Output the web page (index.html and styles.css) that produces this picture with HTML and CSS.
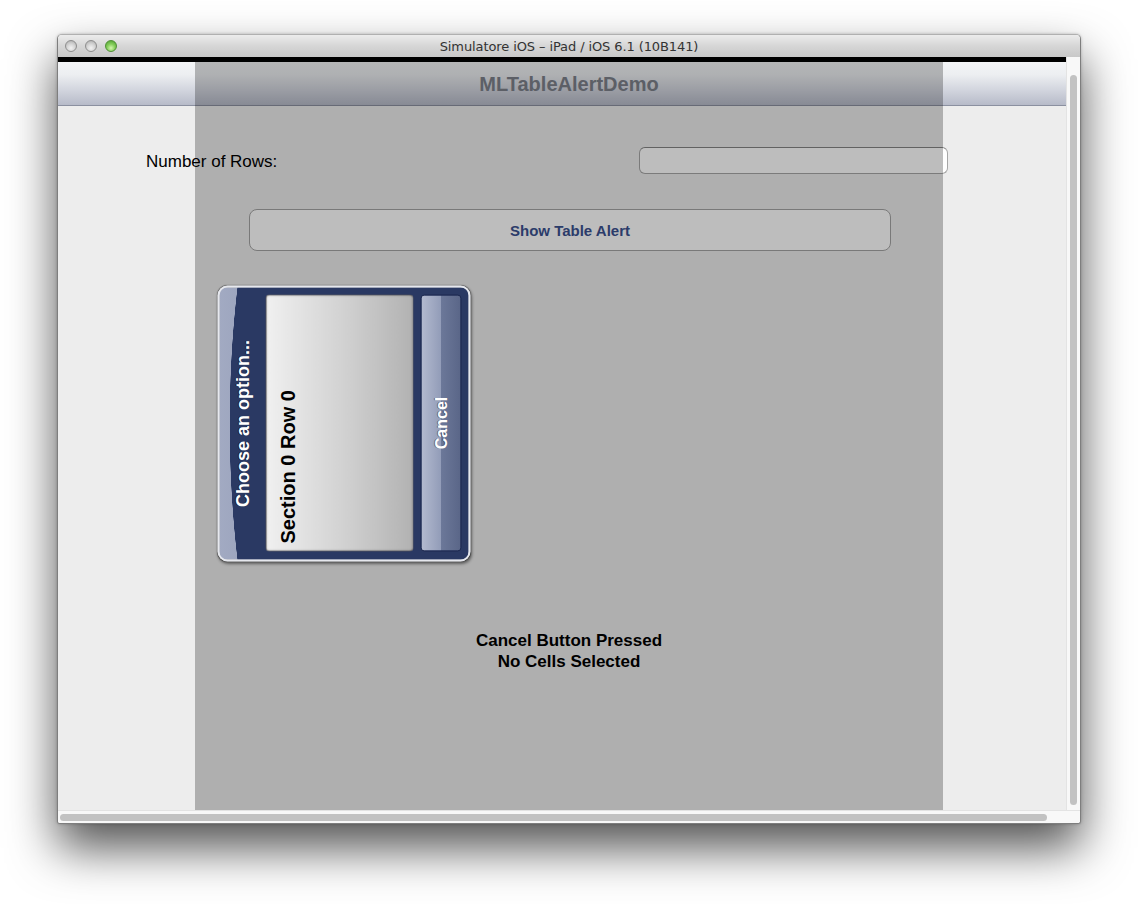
FILE: index.html
```html
<!DOCTYPE html>
<html>
<head>
<meta charset="utf-8">
<title>Simulatore iOS</title>
<link rel="stylesheet" href="styles.css">
</head>
<body>
<div class="window">
  <div class="titlebar">
    <div class="lights">
      <span class="light"></span>
      <span class="light"></span>
      <span class="light green"></span>
    </div>
    <div class="win-title">Simulatore iOS – iPad / iOS 6.1 (10B141)</div>
    <div></div>
  </div>
  <div class="body">
    <div class="screen">
      <div class="statusbar"></div>
      <div class="navbar"><div class="nav-title">MLTableAlertDemo</div></div>
      <div class="content">
        <div class="row">
          <span class="label">Number of Rows:</span>
          <div class="field"></div>
        </div>
        <div class="button">Show Table Alert</div>
        <div class="status">Cancel Button Pressed<br>No Cells Selected</div>
      </div>
      <div class="overlay"></div>
      <div class="alert">
        <div class="alert-title">Choose an option...</div>
        <div class="alert-table">
          <div class="cell">Section 0 Row 0</div>
        </div>
        <div class="alert-cancel">Cancel</div>
      </div>
    </div>
    <div class="vscroll"><div class="vthumb"></div></div>
  </div>
  <div class="hscroll"><div class="hthumb"></div></div>
</div>
</body>
</html>
```
FILE: styles.css
```css
html, body {
  margin: 0;
  background: #ffffff;
}
body {
  width: 1138px;
  height: 904px;
  overflow: hidden;
  font-family: "Liberation Sans", Arial, sans-serif;
}
.window {
  margin: 34px 0 0 57px;
  width: 1024px;
  height: 790px;
  box-sizing: border-box;
  border: 1px solid #7e7e7e;
  border-top-color: #b0b0b0;
  border-radius: 5px 5px 3px 3px;
  display: flex;
  flex-direction: column;
  background: #f7f7f7;
  box-shadow: 0 24px 48px rgba(0, 0, 0, 0.68), 0 0 3px rgba(0, 0, 0, 0.25);
  overflow: hidden;
}
.titlebar {
  height: 22px;
  flex: none;
  display: grid;
  grid-template-columns: 1fr auto 1fr;
  align-items: center;
  background: linear-gradient(#ececec, #d6d6d6 50%, #c8c8c8);
}
.lights {
  display: flex;
  gap: 8px;
  padding-left: 7px;
}
.light {
  width: 12px;
  height: 12px;
  box-sizing: border-box;
  border-radius: 50%;
  border: 1px solid #8e8e8e;
  background: radial-gradient(circle at 50% 70%, #f2f2f2 0, #d6d6d6 45%, #a9a9a9 100%);
}
.light.green {
  border-color: #4f8f35;
  background: radial-gradient(circle at 50% 70%, #d4f5b0 0, #86cf5c 45%, #4a9a2e 100%);
}
.win-title {
  font-family: "DejaVu Sans", sans-serif;
  font-size: 13px;
  color: #333;
  letter-spacing: -0.1px;
  padding-top: 1px;
}
.body {
  flex: 1;
  display: flex;
  min-height: 0;
}
.screen {
  width: 1008px;
  position: relative;
  display: flex;
  flex-direction: column;
}
.statusbar {
  height: 5px;
  background: #000;
  flex: none;
}
.navbar {
  height: 44px;
  flex: none;
  box-sizing: border-box;
  border-bottom: 1px solid #8b90a0;
  background: linear-gradient(#f4f5f7, #eceef1 30%, #d2d5de 65%, #b7bbc9);
  display: flex;
}
.nav-title {
  margin-left: 137px;
  width: 748px;
  text-align: center;
  line-height: 45px;
  font-size: 20px;
  font-weight: bold;
  color: #7c818a;
}
.content {
  flex: 1;
  background: #ededed;
}
.row {
  display: flex;
  justify-content: space-between;
  align-items: center;
  padding: 41px 118px 0 88px;
}
.label {
  font-size: 17px;
  color: #000;
  padding-top: 2px;
}
.field {
  width: 309px;
  height: 27px;
  box-sizing: border-box;
  border: 1px solid #a6a6a6;
  border-top-color: #858585;
  border-radius: 6px;
  background: #fff;
}
.button {
  margin: 35px 0 0 191px;
  width: 642px;
  height: 42px;
  box-sizing: border-box;
  border: 1px solid #a4a4a4;
  border-radius: 8px;
  background: #fff;
  display: flex;
  align-items: center;
  justify-content: center;
  font-size: 15px;
  font-weight: bold;
  color: #3b5290;
}
.status {
  margin: 379px 0 0 137px;
  width: 748px;
  text-align: center;
  font-size: 17px;
  line-height: 21px;
  font-weight: bold;
  color: #000;
}
.overlay {
  position: absolute;
  left: 137px;
  top: 5px;
  width: 748px;
  bottom: 0;
  background: rgba(0, 0, 0, 0.257);
}
.alert {
  position: absolute;
  left: 147.5px;
  top: 239.5px;
  width: 276px;
  height: 253px;
  box-sizing: border-box;
  transform: rotate(-90deg);
  border: 2px solid #e6e8ee;
  border-radius: 10px;
  box-shadow: -2px 1px 3px rgba(0, 0, 0, 0.45), 0 0 1px rgba(0, 0, 0, 0.5);
  background:
    radial-gradient(ellipse 493px 200px at 50% 210px, #2a3963 calc(100% - 1px), transparent 100%),
    linear-gradient(#a2aac2, #8590ae 45%, #6a7698 100%);
  display: flex;
  flex-direction: column;
}
.alert-title {
  height: 45px;
  flex: none;
  display: flex;
  align-items: center;
  justify-content: center;
  color: #fff;
  font-size: 18px;
  font-weight: bold;
  text-shadow: 0 -1px 0 rgba(0, 0, 0, 0.5);
  padding-top: 2px;
  box-sizing: border-box;
}
.alert-table {
  margin: 1px 0 0 8px;
  width: 257px;
  height: 148px;
  box-sizing: border-box;
  border-radius: 4px;
  border: 1px solid rgba(40, 40, 50, 0.55);
  background: linear-gradient(#f0f0f0, #d0d0d0 55%, #b2b2b2);
  box-shadow: inset 0 0 2px rgba(0, 0, 0, 0.3);
  flex: none;
}
.cell {
  height: 43px;
  line-height: 43px;
  padding-left: 7px;
  font-size: 20px;
  font-weight: bold;
  color: #000;
}
.alert-cancel {
  margin: 7px 0 0 8px;
  width: 257px;
  height: 41px;
  box-sizing: border-box;
  border-radius: 4px;
  border: 1px solid #1d2950;
  background: linear-gradient(#b3bacf, #929cb8 50%, #6c7899 50%, #5a6688);
  display: flex;
  align-items: center;
  justify-content: center;
  color: #fff;
  font-size: 16px;
  font-weight: bold;
  text-shadow: 0 -1px 0 rgba(0, 0, 0, 0.4);
  flex: none;
}
.vscroll {
  width: 14px;
  flex: none;
  box-sizing: border-box;
  border-left: 1px solid #e3e3e3;
  background: #f8f8f8;
  padding: 18px 0 0 3px;
}
.vthumb {
  width: 7px;
  height: 730px;
  border-radius: 4px;
  background: #c2c2c2;
}
.hscroll {
  height: 13px;
  flex: none;
  box-sizing: border-box;
  border-top: 1px solid #e3e3e3;
  background: #f8f8f8;
  padding: 3px 0 0 2px;
}
.hthumb {
  width: 987px;
  height: 7px;
  border-radius: 4px;
  background: #c2c2c2;
}
```
